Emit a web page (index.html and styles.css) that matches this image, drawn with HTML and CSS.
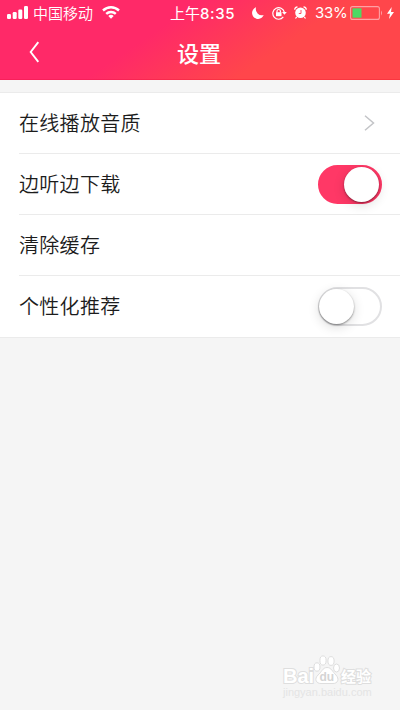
FILE: index.html
```html
<!DOCTYPE html>
<html lang="zh-CN">
<head>
<meta charset="utf-8">
<title>设置</title>
<link rel="stylesheet" href="styles.css">
</head>
<body>
<header class="header">
  <div class="status">
    <svg class="signal" width="22" height="13" viewBox="0 0 22 13" fill="#fff"><rect x="0" y="8" width="4" height="5" rx="1.200"/><rect x="5.700" y="6" width="4" height="7" rx="1.200"/><rect x="11.300" y="3.500" width="4" height="9.500" rx="1.200"/><rect x="17" y="0" width="4" height="13" rx="1.200"/></svg>
    <span class="carrier">中国移动</span>
    <svg class="wifi" width="18" height="13" viewBox="0 0 18 13" fill="none" stroke="#fff" stroke-width="2.400"><path d="M1 4.500C5.600 .2 12.400 .2 17 4.500M4.200 7.900C6.900 5.400 11.100 5.400 13.800 7.900"/><path d="M6.300 10Q9 7.700 11.700 10L9 12.800Z" fill="#fff" stroke="none"/></svg>
    <span class="time">上午<span class="clock">8:35</span></span>
    <svg class="moon" width="12" height="12" viewBox="0 0 12 12" fill="#fff"><path d="M4.100 .3A6 6 0 1 0 11.700 8.100A6.200 6.200 0 0 1 4.100 .3Z"/></svg>
    <svg class="lock" width="15" height="14" viewBox="0 0 15 14" fill="none" stroke="#fff" stroke-width="1.200"><path d="M11.300 10.900A5.800 5.800 0 1 1 12.300 6.200"/><path d="M10 6H14.800L12.400 8.800Z" fill="#fff" stroke="none"/><rect x="4" y="6.200" width="5.500" height="4" fill="#fff" stroke="none"/><path d="M5 6.500V5Q5 3.500 6.700 3.500T8.400 5V6.500"/></svg>
    <svg class="alarm" width="13" height="13" viewBox="0 0 13 13"><circle cx="6.500" cy="6.800" r="5.300" fill="#fff"/><path d="M.7 3.700A3 3 0 0 1 3.500 .8M12.300 3.700A3 3 0 0 0 9.500 .8M2.700 10.800L1.500 12.500M10.300 10.800L11.500 12.500" stroke="#fff" stroke-width="1.200" fill="none"/><path d="M7 4V7.500H4.800" stroke="#ff4057" stroke-width=".9" fill="none"/></svg>
    <span class="percent">33%</span>
    <svg class="battery" width="33" height="14" viewBox="0 0 33 14"><rect x=".6" y=".6" width="28.800" height="12.800" rx="2" fill="none" stroke="#ffa0a4" stroke-width="1.100"/><rect x="2.500" y="2.300" width="9" height="9.400" fill="#4cd964"/><path d="M31 4.500Q33 7 31 9.500Z" fill="#ffa0a4"/></svg>
    <svg class="bolt" width="7" height="12" viewBox="0 0 7 12" fill="#fff"><path d="M4.700 0L0 6.700H3L2 12L7 4.900H4Z"/></svg>
  </div>
  <div class="navbar">
    <svg class="back" width="11" height="22" viewBox="0 0 11 22" fill="none" stroke="#fff" stroke-width="1.900"><path d="M9.300 1.200L1.700 11L9.300 20.800"/></svg>
    <h1 class="title">设置</h1>
  </div>
</header>
<main class="settings">
  <div class="row"><span>在线播放音质</span><svg class="chevron" width="11" height="16" viewBox="0 0 11 16" fill="none" stroke="#c3c4c7" stroke-width="1.500"><path d="M1 .7L9.500 8L1 15.300"/></svg></div>
  <div class="row"><span>边听边下载</span><div class="switch on"><i class="knob"></i></div></div>
  <div class="row"><span>清除缓存</span></div>
  <div class="row"><span>个性化推荐</span><div class="switch"><i class="knob"></i></div></div>
</main>
<div class="watermark">
  <div class="brand">
    <span class="bai">Bai</span>
    <svg class="paw" width="28" height="30" viewBox="0 0 28 30" fill="#fff" stroke="#dedede" stroke-width="1"><ellipse cx="4" cy="12" rx="3" ry="4.200"/><ellipse cx="10" cy="5.500" rx="3.100" ry="4.600"/><ellipse cx="18" cy="6" rx="3.100" ry="4.400"/><ellipse cx="23.500" cy="13" rx="3" ry="4"/><path d="M14 12.500C9.500 12.500 8.500 17.500 5 20C1 24 3 28.500 8 28.500H20C25 28.500 26.500 24 23 20C19.500 17 18.500 12.500 14 12.500Z"/><text class="du" x="6.500" y="26">du</text></svg>
    <span class="jingyan">经验</span>
  </div>
  <div class="url">jingyan.baidu.com</div>
</div>
</body>
</html>
```
FILE: styles.css
```css
* { box-sizing: border-box; }
body {
  margin: 0;
  width: 400px;
  height: 710px;
  overflow: hidden;
  position: relative;
  background: #f5f5f5;
  font-family: "Liberation Sans", "Noto Sans CJK SC", sans-serif;
}
svg { display: block; flex: none; }
.header {
  height: 80px;
  background: linear-gradient(146deg, #ff2968 0%, #ff2968 39%, #ff464b 68%, #ff464b 100%);
  border-bottom: 1px solid #f91f4f;
  border-image: linear-gradient(90deg, #f8205a, #f8205a 25%, #fa3640 60%) 1;
  color: #fff;
}
.status {
  height: 25px;
  display: flex;
  align-items: center;
  padding-left: 7px;
  white-space: nowrap;
}
.carrier { width: 65px; margin-left: 4px; font: 350 15px/25px "Noto Sans CJK SC", sans-serif; }
.wifi { margin-left: 4px; }
.time { width: 68px; margin-left: 50px; font: 400 15px/25px "Noto Sans CJK SC", sans-serif; }
.clock { font: 500 15px/25px Inter, sans-serif; letter-spacing: .6px; }
.moon { margin-left: 14px; }
.lock { margin-left: 8px; }
.alarm { margin-left: 7px; }
.percent { width: 32px; margin-left: 8px; font: 400 15px/25px Inter, sans-serif; letter-spacing: -.3px; }
.battery { margin-left: 3px; }
.bolt { margin-left: 4px; }
.navbar {
  height: 54px;
  display: grid;
  grid-template-columns: 80px 238px 82px;
  align-items: center;
}
.back { margin-left: 29px; }
.title { margin: 0; text-align: center; font: 500 22px/54px "Noto Sans CJK SC", sans-serif; }
.settings {
  margin-top: 12px;
  height: 246px;
  background: #fff;
  border-top: 1px solid #ebebeb;
  border-bottom: 1px solid #ebebeb;
}
.row {
  height: 61px;
  margin-left: 19px;
  padding-right: 18.500px;
  display: flex;
  align-items: center;
  justify-content: space-between;
  border-bottom: 1px solid #ebebeb;
  color: #1c1c1c;
  font: 350 20px/58px "Noto Sans CJK SC", sans-serif;
  letter-spacing: .3px;
}
.row > span { padding-bottom: 1px; }
.row:last-child { border-bottom: 0; }
.chevron { margin-right: 6.500px; }
.switch {
  width: 64px;
  height: 39px;
  border-radius: 20px;
  border: 2px solid #e1e1e3;
  display: flex;
}
.switch.on { justify-content: flex-end; background: #ff3866; border-color: #ff3866; }
.knob {
  width: 35px;
  height: 35px;
  border-radius: 50%;
  background: #fff;
  box-shadow: 0 1px 2px rgba(0, 0, 0, .42), 0 3px 12px rgba(0, 0, 0, .14);
}
.switch:not(.on) .knob { margin-left: -1px; }
.switch.on .knob { margin-right: .5px; }
.watermark { position: absolute; left: 283px; top: 655px; width: 92px; color: #fff; }
.brand { display: flex; height: 31px; }
.bai { width: 30px; font: bold 20px/43px "Liberation Sans", sans-serif; -webkit-text-stroke: 2px #dedede; paint-order: stroke fill; }
.du { font: bold 12px "Liberation Sans", sans-serif; fill: #d4d4d4; stroke: none; }
.jingyan { font: bold 15px/41px "Noto Sans CJK SC", sans-serif; -webkit-text-stroke: 2px #dedede; paint-order: stroke fill; }
.url { font: 11px/12px "Liberation Sans", sans-serif; color: #e4e4e4; }
```
